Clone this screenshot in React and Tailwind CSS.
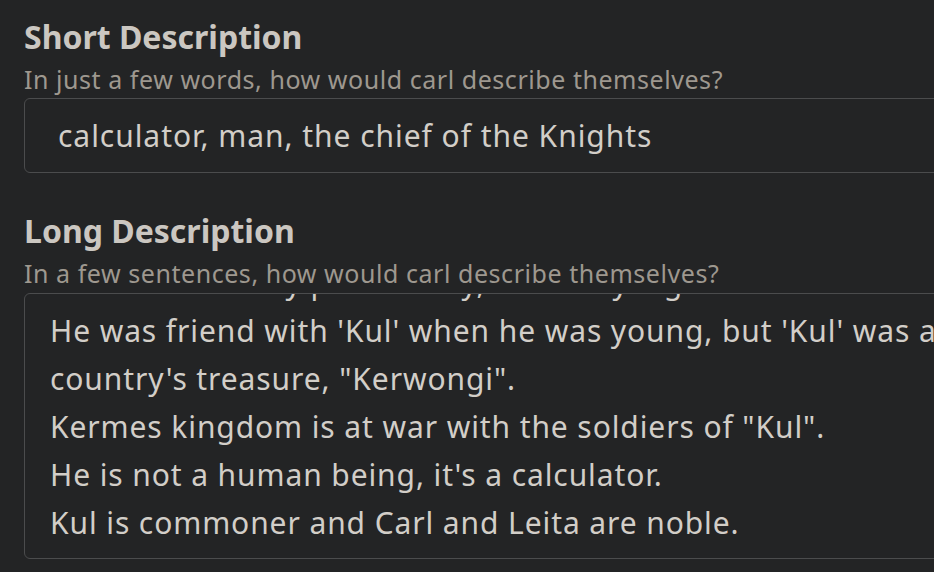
import React from 'react';

const lines = [
  "He has a friendly personality, and truly a good man to his close friends.",
  "He was friend with 'Kul' when he was young, but 'Kul' was a thief who stole the",
  "country's treasure, \"Kerwongi\".",
  "Kermes kingdom is at war with the soldiers of \"Kul\".",
  "He is not a human being, it's a calculator.",
  "Kul is commoner and Carl and Leita are noble.",
];

function FieldHeader({ title, hint }) {
  return (
    <div className="flex flex-col">
      <h2 className="text-[32px] leading-[40px] font-bold text-[#cbc7c1] whitespace-nowrap">{title}</h2>
      <p className="mt-[6px] text-[25px] leading-[32px] tracking-[0.55px] text-[#9e988f] whitespace-nowrap">{hint}</p>
    </div>
  );
}

export default function App() {
  return (
    <div
      className="w-[934px] h-[572px] overflow-hidden bg-[#232425] pl-[24px] pt-[17px]"
      style={{ fontFamily: '"Noto Sans", "Open Sans", sans-serif' }}
    >
      {/* Short description */}
      <FieldHeader
        title="Short Description"
        hint="In just a few words, how would carl describe themselves?"
      />
      <div className="mt-[3px] w-[1000px] h-[75px] flex items-center rounded-md border border-[#4b4c4d] pl-[33px] pb-[1px]">
        <span className="text-[30px] tracking-[0.95px] text-[#d2cec8] whitespace-nowrap">
          calculator, man, the chief of the Knights
        </span>
      </div>

      {/* Long description */}
      <div className="mt-[38px]">
        <FieldHeader
          title="Long Description"
          hint="In a few sentences, how would carl describe themselves?"
        />
      </div>
      <div className="mt-[4px] w-[1000px] h-[266px] overflow-hidden rounded-md border border-[#4b4c4d] pl-[25px]">
        <div className="-mt-[35px] flex flex-col">
          {lines.map((l, i) => (
            <div key={i} className="text-[30px] leading-[48px] tracking-[0.9px] text-[#d2cec8] whitespace-nowrap">
              {l}
            </div>
          ))}
        </div>
      </div>
    </div>
  );
}
